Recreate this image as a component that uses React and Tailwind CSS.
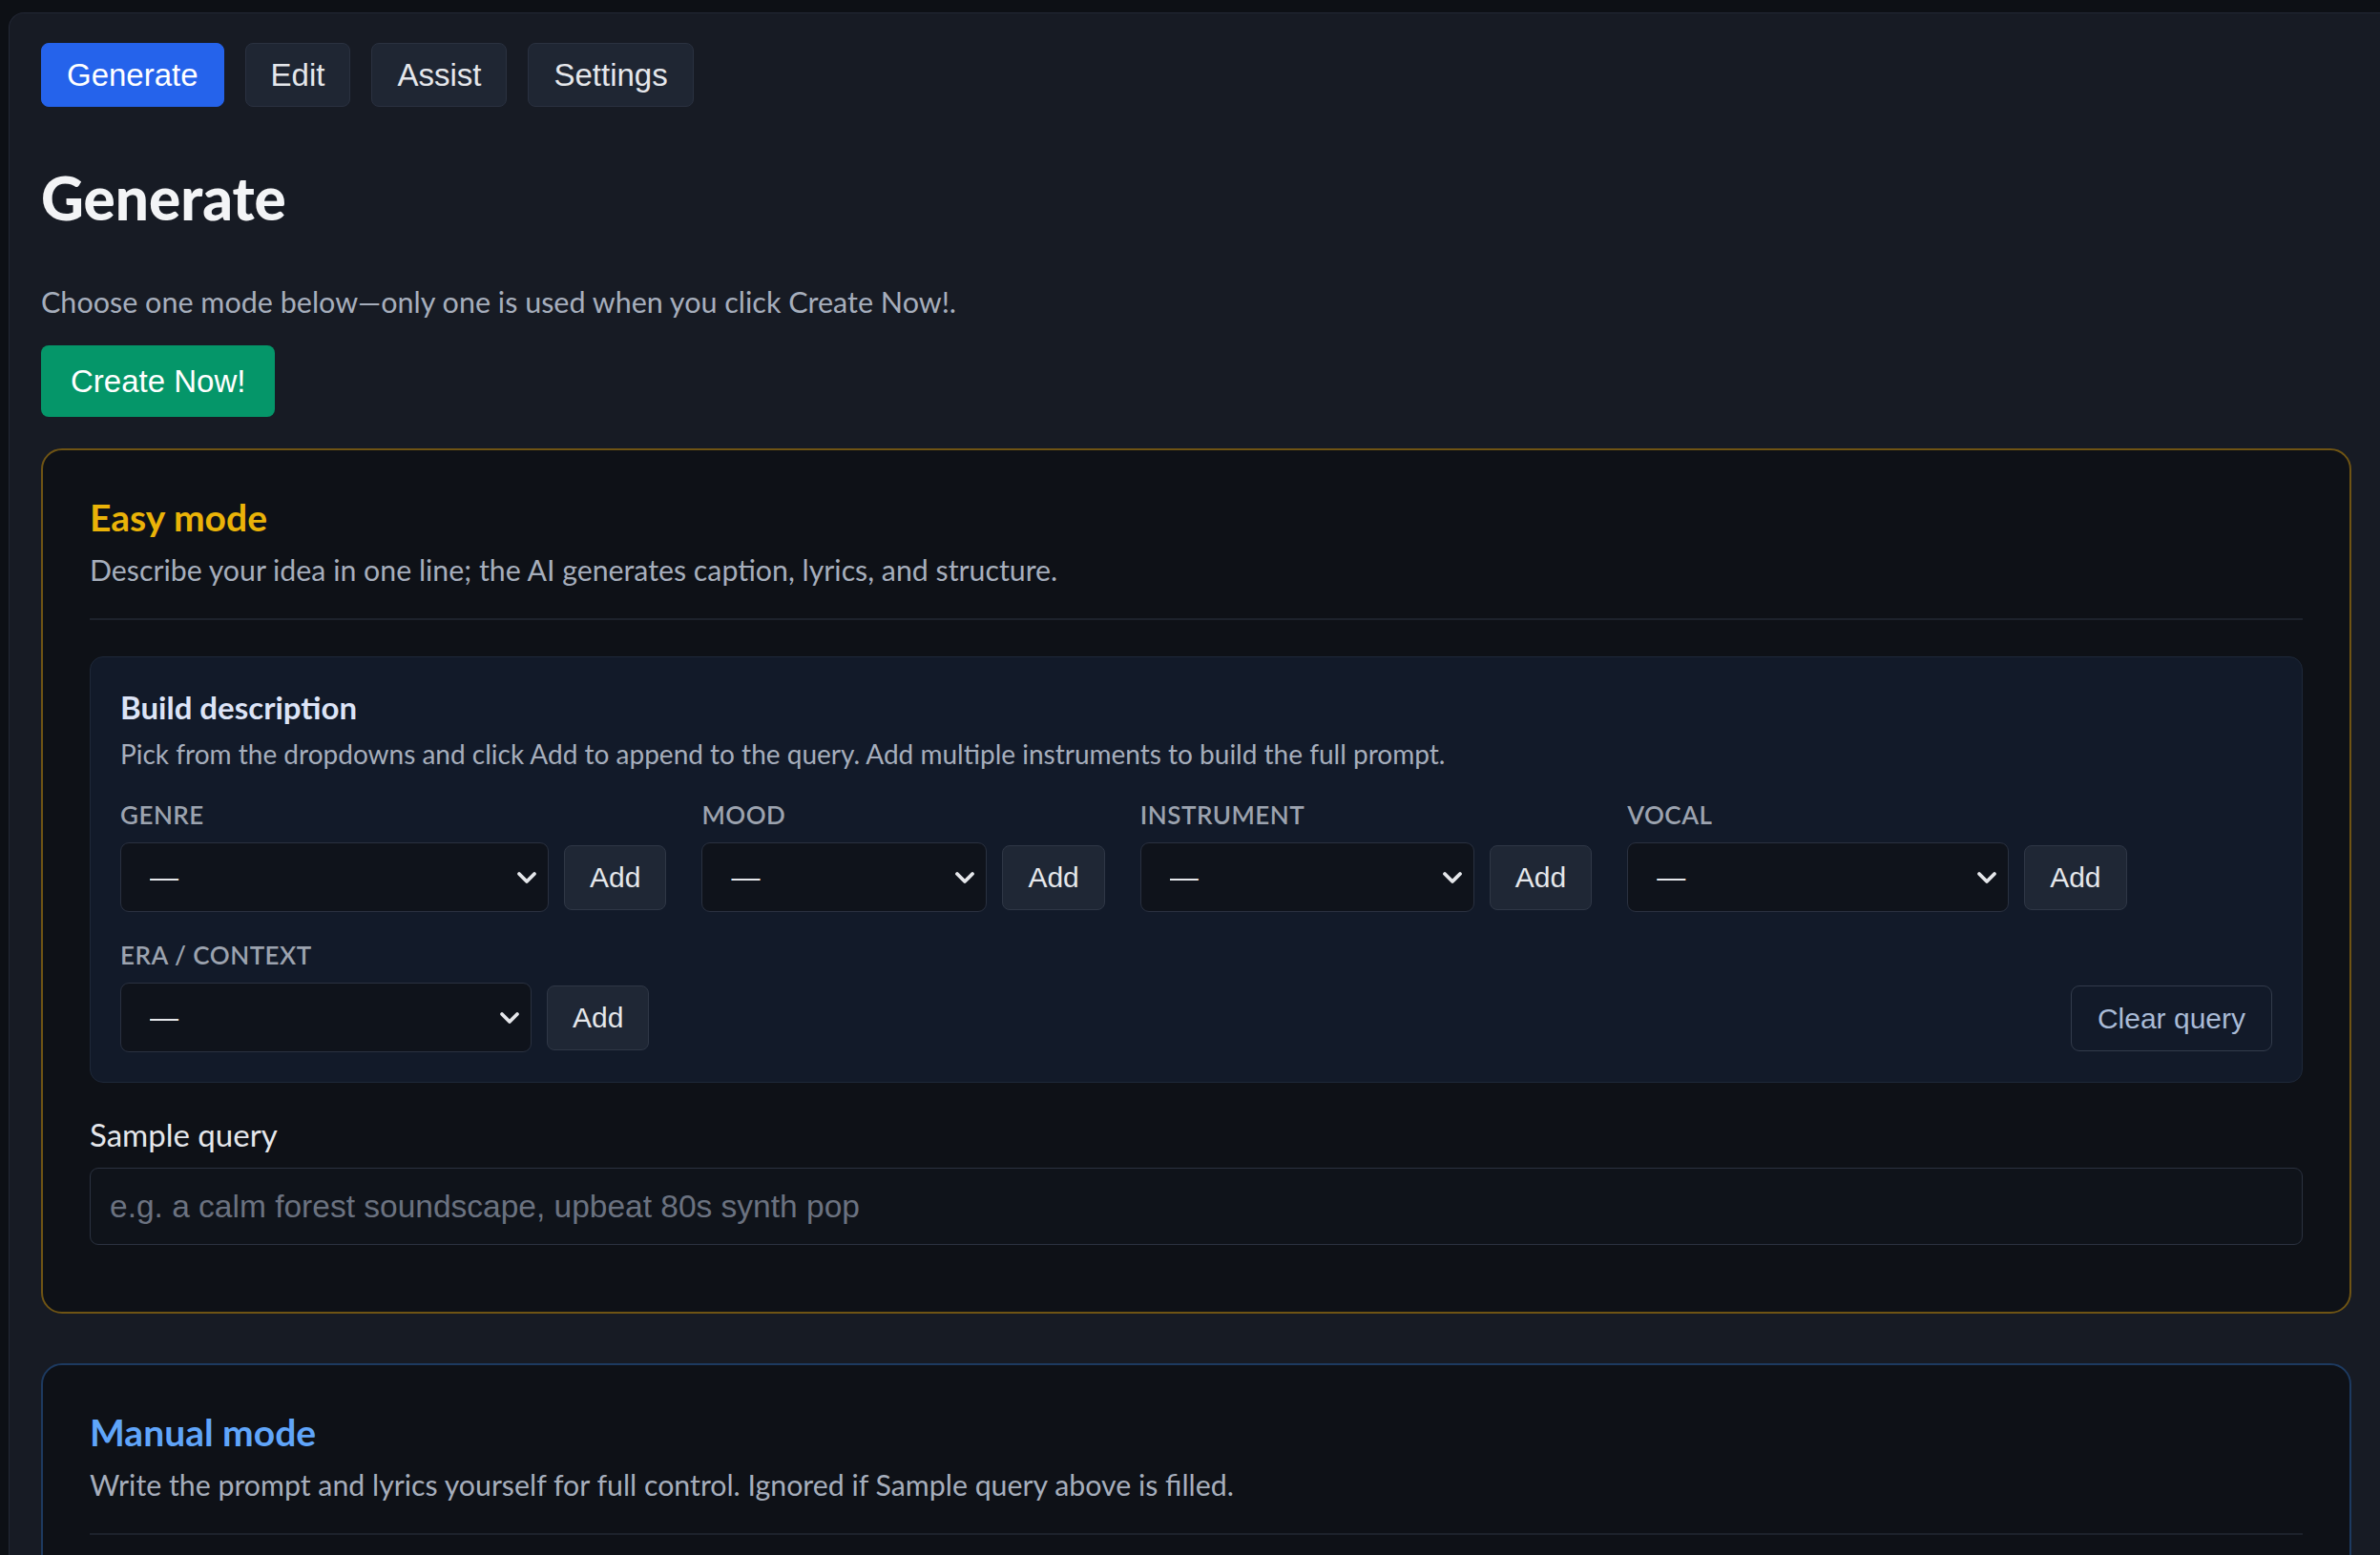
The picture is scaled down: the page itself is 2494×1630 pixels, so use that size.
import React from "react";

const sans = "font-['Lato','Noto_Sans',sans-serif]";
const ui = "font-['Liberation_Sans',Arial,sans-serif]";

const tabs = ["Generate", "Edit", "Assist", "Settings"];

const pickers = [
  { label: "Genre", width: "w-[449px]", options: ["Pop", "Rock", "Jazz", "Hip hop", "Electronic", "Classical"] },
  { label: "Mood", width: "w-[299px]", options: ["Happy", "Calm", "Dark", "Energetic"] },
  { label: "Instrument", width: "w-[350px]", options: ["Piano", "Guitar", "Synth", "Drums", "Strings"] },
  { label: "Vocal", width: "w-[400px]", options: ["Male vocal", "Female vocal", "Choir", "Instrumental"] },
  { label: "Era / Context", width: "w-[431px]", options: ["60s", "70s", "80s", "90s", "Modern"] },
];

const Chevron = () => (
  <svg
    className="pointer-events-none absolute right-[10px] top-1/2 -translate-y-1/2"
    width="26"
    height="26"
    viewBox="0 0 26 26"
    fill="none"
    stroke="#e5e7eb"
    strokeWidth="3.8"
    strokeLinecap="round"
    strokeLinejoin="round"
  >
    <path d="M5 9l8 8 8-8" />
  </svg>
);

const Picker = ({ label, width, options }) => (
  <div className="flex flex-col">
    <label className={`${sans} mb-[11px] text-[26px] leading-[36px] font-semibold uppercase tracking-[0.5px] text-[#9ca3af]`}>
      {label}
    </label>
    <div className="flex items-center gap-[16px]">
      <div className={`relative ${width}`}>
        <select
          defaultValue=""
          className={`${ui} h-[73px] w-full appearance-none rounded-[9px] border border-[#2a3140] bg-[#0f131b] pl-[30px] pr-[44px] text-[30px] text-[#e5e7eb] outline-none`}
        >
          <option value="">—</option>
          {options.map((o) => (
            <option key={o} value={o}>
              {o}
            </option>
          ))}
        </select>
        <Chevron />
      </div>
      <button className={`${ui} h-[68px] rounded-[8px] border border-[#2f3746] bg-[#1f2735] px-[26px] text-[30px] leading-none text-[#e5e7eb]`}>
        Add
      </button>
    </div>
  </div>
);

const ModeCard = ({ title, titleColor, border, text, children }) => (
  <section className={`w-[2421px] rounded-[22px] border-2 ${border} bg-[#0e1117] px-[49px] pt-[46px] pb-[70px]`}>
    <h2 className={`${sans} text-[39px] leading-[48px] font-bold ${titleColor}`}>{title}</h2>
    <p className={`${sans} mt-[11px] text-[30.3px] leading-[40px] text-[#a6aebc]`}>{text}</p>
    <div className="mt-[31px] h-[2px] bg-[#1d222c]" />
    {children}
  </section>
);

export default function App() {
  return (
    <div className="h-[1630px] w-full overflow-hidden bg-[#0d1015] pl-[9px] pt-[13px]">
      <div className="min-h-[1700px] w-[2560px] rounded-tl-[16px] border-l border-t border-[#232835] bg-[#171b24] pl-[33px] pt-[31px]">
        {/* tab bar */}
        <nav className="flex gap-[22px]">
          {tabs.map((t) => (
            <button
              key={t}
              className={`${ui} h-[67px] rounded-[8px] border px-[26px] text-[33px] leading-none ${
                t === "Generate"
                  ? "border-[#2563eb] bg-[#2563eb] text-white"
                  : "border-[#2a3140] bg-[#1f2633] text-[#e5e7eb]"
              }`}
            >
              {t}
            </button>
          ))}
        </nav>

        <h1 className={`${sans} mt-[57px] text-[62px] leading-[76px] font-black text-[#f3f4f6]`}>Generate</h1>
        <p className={`${sans} mt-[51px] text-[30.5px] leading-[40px] text-[#a6aebc]`}>
          Choose one mode below—only one is used when you click Create Now!.
        </p>
        <button className={`${ui} mt-[26px] h-[75px] rounded-[8px] bg-[#059669] px-[31px] text-[33px] leading-none text-white`}>
          Create Now!
        </button>

        <div className="mt-[33px] flex flex-col gap-[52px]">
          <ModeCard
            title="Easy mode"
            titleColor="text-[#eab308]"
            border="border-[#6f5414]"
            text="Describe your idea in one line; the AI generates caption, lyrics, and structure."
          >
            {/* description builder */}
            <div className="mt-[38px] rounded-[14px] border border-[#1e2839] bg-[#121a29] px-[31px] pt-[31px] pb-[31px]">
              <h3 className={`${sans} text-[33px] leading-[42px] font-bold text-[#dde4f7]`}>Build description</h3>
              <p className={`${sans} mt-[10px] text-[28px] leading-[36px] text-[#a6aebc]`}>
                Pick from the dropdowns and click Add to append to the query. Add multiple instruments to build the full prompt.
              </p>
              <div className="mt-[28px] flex flex-wrap gap-x-[37px] gap-y-[27px]">
                {pickers.map((p) => (
                  <Picker key={p.label} {...p} />
                ))}
                <button
                  className={`${ui} ml-auto self-end mb-[1px] h-[69px] rounded-[9px] border border-[#323b4b] bg-transparent px-[27px] text-[30px] leading-none text-[#a9bbd6]`}
                >
                  Clear query
                </button>
              </div>
            </div>

            <label className={`${sans} mt-[34px] block text-[33px] leading-[40px] text-[#e5e7eb]`}>Sample query</label>
            <input
              type="text"
              placeholder="e.g. a calm forest soundscape, upbeat 80s synth pop"
              className={`${ui} mt-[15px] block h-[81px] w-full rounded-[9px] border border-[#2b3240] bg-[#0f131a] px-[20px] text-[33.5px] text-[#e5e7eb] outline-none placeholder:text-[#6b7280]`}
            />
          </ModeCard>

          <ModeCard
            title="Manual mode"
            titleColor="text-[#60a5fa]"
            border="border-[#1d3a60]"
            text="Write the prompt and lyrics yourself for full control. Ignored if Sample query above is filled."
          >
            <div className="h-[240px]" />
          </ModeCard>
        </div>
      </div>
    </div>
  );
}
